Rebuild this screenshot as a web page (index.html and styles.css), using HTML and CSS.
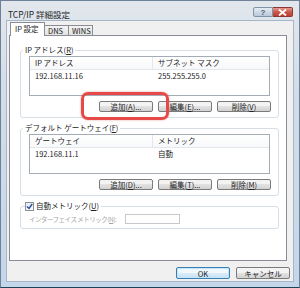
FILE: index.html
```html
<!DOCTYPE html>
<html lang="ja">
<head>
  <meta charset="UTF-8">
  <title>TCP/IP 詳細設定</title>
  <link rel="stylesheet" href="styles.css">
</head>
<body>
  <div class="window">
    <div class="titlebar">
      <span class="title">TCP/IP 詳細設定</span>
      <div class="caption-btns">
        <span class="cap help">?</span>
        <span class="cap close">
          <svg width="9" height="7" viewBox="0 0 9 7"><path d="M1 0.5 L8 6.5 M8 0.5 L1 6.5" stroke="#fff" stroke-width="1.8"/></svg>
        </span>
      </div>
    </div>

    <div class="client">
      <div class="tabs">
        <span class="tab active">IP 設定</span>
        <span class="tab">DNS</span>
        <span class="tab">WINS</span>
      </div>

      <div class="panel">
        <fieldset class="group">
          <legend>IP アドレス(<u>R</u>)</legend>
          <div class="list">
            <div class="list-row list-head"><span class="col1">IP アドレス</span><span>サブネット マスク</span></div>
            <div class="list-row"><span class="col1">192.168.11.16</span><span>255.255.255.0</span></div>
          </div>
          <div class="btn-row">
            <span class="mark"><span class="btn">追加(<u>A</u>)...</span></span>
            <span class="btn">編集(<u>E</u>)...</span>
            <span class="btn">削除(<u>V</u>)</span>
          </div>
        </fieldset>

        <fieldset class="group">
          <legend>デフォルト ゲートウェイ(<u>F</u>)</legend>
          <div class="list">
            <div class="list-row list-head"><span class="col1">ゲートウェイ</span><span>メトリック</span></div>
            <div class="list-row"><span class="col1">192.168.11.1</span><span>自動</span></div>
          </div>
          <div class="btn-row">
            <span class="btn">追加(<u>D</u>)...</span>
            <span class="btn">編集(<u>T</u>)...</span>
            <span class="btn">削除(<u>M</u>)</span>
          </div>
        </fieldset>

        <fieldset class="group group-metric">
          <legend>
            <span class="check">
              <svg width="7" height="7" viewBox="0 0 7 7"><path d="M1 3.5 L3 5.5 L6.2 1" fill="none" stroke="#2a4f9a" stroke-width="1.4"/></svg>
            </span>自動メトリック(<u>U</u>)
          </legend>
          <div class="metric-row">
            <span class="disabled">インターフェイス メトリック(<u>N</u>):</span>
            <span class="textbox"></span>
          </div>
        </fieldset>
      </div>

      <div class="dlg-btns">
        <span class="btn default">OK</span>
        <span class="btn">キャンセル</span>
      </div>
    </div>
  </div>
</body>
</html>
```

FILE: styles.css
```css
* {
  box-sizing: border-box;
  margin: 0;
  padding: 0;
}

body {
  font-family: "Noto Sans CJK JP", "Liberation Sans", sans-serif;
  font-size: 7.5px;
  color: #222;
  background: #fff;
  white-space: nowrap;
}

u {
  text-decoration: underline;
}

.window {
  width: 300px;
  height: 288px;
  background: linear-gradient(#e2e7ed, #d3dde8 30%, #c4d6ea);
  border: 1px solid #6d8197;
  border-bottom-color: #1d4456;
  display: flex;
  flex-direction: column;
}

.titlebar {
  height: 19px;
  display: flex;
  justify-content: space-between;
  align-items: flex-start;
  padding-left: 7px;
}

.title {
  font-size: 8.5px;
  line-height: 10px;
  margin-top: 8px;
  color: #1e1e1e;
}

.caption-btns {
  display: flex;
  margin-top: 6px;
  margin-right: 6px;
}

.cap {
  height: 10px;
  display: flex;
  align-items: center;
  justify-content: center;
  border: 1px solid #7f93a8;
}

.help {
  width: 20px;
  border-radius: 2px 0 0 2px;
  background: linear-gradient(#e3ebf3, #b9c9da);
  color: #4a5f75;
  font-family: "Liberation Sans", sans-serif;
  font-size: 8px;
  font-weight: bold;
}

.close {
  width: 20px;
  border-left: none;
  border-color: #8a3a32;
  border-radius: 0 2px 2px 0;
  background: linear-gradient(#e69a8f, #c9584a 50%, #c0402f);
}

.client {
  flex: 1;
  margin: 0 5px 5px 5px;
  background: #f0f0f0;
  border: 1px solid #a7b6c6;
  display: flex;
  flex-direction: column;
}

.tabs {
  height: 14px;
  display: flex;
  align-items: flex-end;
  padding-left: 3px;
  position: relative;
  z-index: 1;
}

.tab {
  width: 25px;
  height: 10px;
  line-height: 9px;
  padding-left: 3px;
  border: 1px solid #898c95;
  border-bottom: none;
  background: linear-gradient(#f4f4f4, #e3e3e3);
  margin-left: -1px;
}

.tab.active {
  width: 35px;
  height: 14px;
  line-height: 12px;
  padding-left: 4px;
  background: #fff;
  margin-bottom: -1px;
  margin-left: 0;
}

.panel {
  margin-left: 2px;
  width: 278px;
  height: 226px;
  background: #fff;
  border: 1px solid #898c95;
  padding: 8px 0 0 10px;
}

.group {
  width: 259px;
  border: 1px solid #d5dfe5;
  border-radius: 3px;
  padding: 0 8px 5px 8px;
  margin-bottom: 4px;
}

.group legend {
  line-height: 12px;
  padding: 0 2px;
  margin-left: -6px;
}

.list {
  height: 40px;
  border: 1px solid #a5acb5;
  background: #fff;
}

.list-row {
  display: flex;
  height: 12px;
  line-height: 12px;
}

.list-head {
  height: 13px;
  border-bottom: 1px solid #e3e6ea;
  background: linear-gradient(#fff, #f7f8fa);
}

.list-row span {
  padding-left: 5px;
}

.col1 {
  width: 123px;
}

.list-head .col1 {
  border-right: 1px solid #e3e6ea;
}

.btn-row {
  display: flex;
  justify-content: flex-end;
  gap: 5px;
  margin-top: 5px;
  margin-right: -1px;
}

.btn {
  display: flex;
  align-items: center;
  justify-content: center;
  width: 54px;
  height: 11px;
  border: 1px solid #7b7b7b;
  border-radius: 2px;
  background: linear-gradient(#f3f3f3 45%, #e2e2e2 50%, #d2d2d2);
  line-height: 9px;
}

.mark {
  position: relative;
}

.mark::after {
  content: "";
  position: absolute;
  top: -9px;
  bottom: -8px;
  left: -18px;
  right: -16px;
  border: 3px solid #e64a48;
  border-radius: 7px;
  box-shadow: 0 0 2px rgba(200, 40, 40, 0.5);
}

.group-metric {
  margin-top: 4px;
  padding-top: 2px;
  padding-bottom: 4px;
}

.group-metric legend {
  display: flex;
  align-items: center;
  margin-left: -4px;
  padding: 0 2px 0 0;
}

.check {
  width: 9px;
  height: 9px;
  border: 1px solid #8e8f8f;
  background: linear-gradient(#e4ecf5, #f7f9fb);
  display: flex;
  align-items: center;
  justify-content: center;
  margin-right: 2px;
}

.metric-row {
  display: flex;
  align-items: center;
}

.disabled {
  width: 96px;
  color: #a3a3a3;
  font-size: 6.5px;
  letter-spacing: -0.5px;
}

.textbox {
  width: 55px;
  height: 10px;
  border: 1px solid #c6c9cd;
  background: #fff;
}

.dlg-btns {
  display: flex;
  justify-content: flex-end;
  gap: 6px;
  margin-top: 6px;
  padding-right: 3px;
}

.dlg-btns .btn {
  height: 12px;
}

.btn.default {
  border-color: #3c7fb1;
  background: linear-gradient(#f0f8fd 45%, #dcecf8 50%, #c8e1f4);
  box-shadow: inset 0 0 0 1px #bfe6fc;
}
```
